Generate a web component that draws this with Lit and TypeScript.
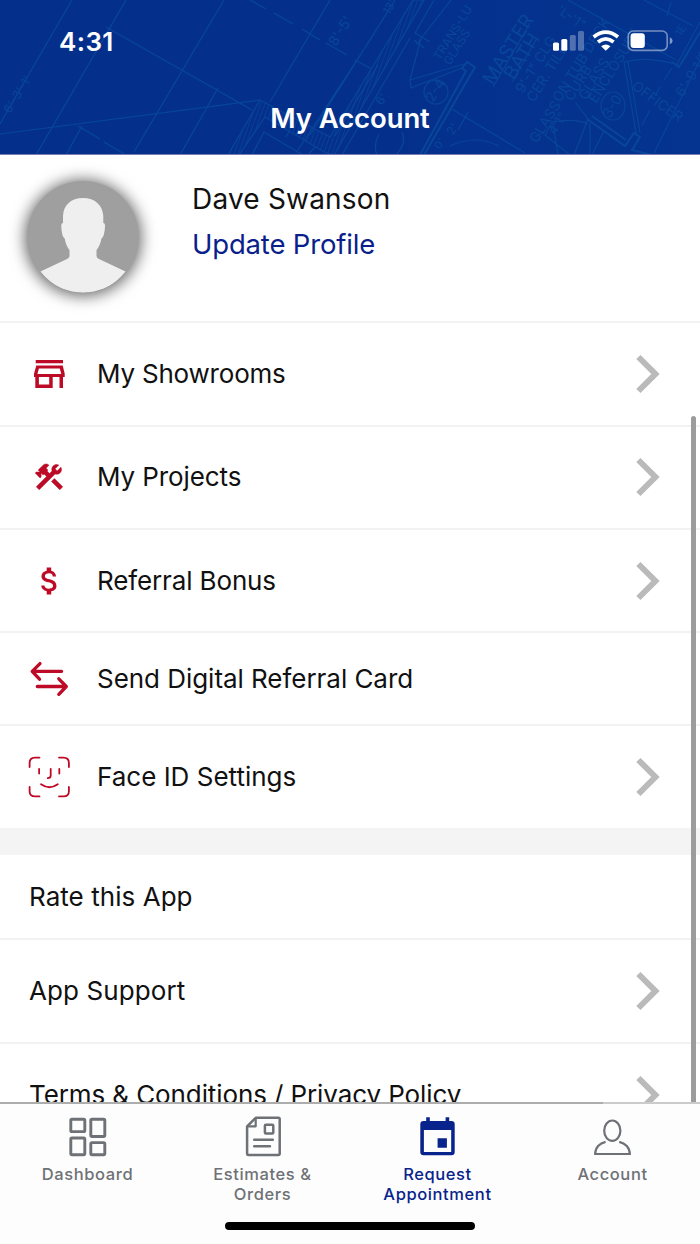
import { LitElement, html, svg, css } from "lit";
import { customElement, property } from "lit/decorators.js";
import { classMap } from "lit/directives/class-map.js";
import { styleMap } from "lit/directives/style-map.js";

const RED = "#bd0a26";

const rowIcons: Record<string, unknown> = {
  store: svg`<path fill=${RED} fill-rule="evenodd" d="M10.7 10H38V13.3H10.7Z M11.3 15.6H37.7L39.7 23.7V27H38V38H34.5V27H27.7V38H10.3V27H9V23.7Z M13.9 18.6L12.4 24H36.3L34.8 18.6Z M13.9 27V34.5H24.2V27Z"/>`,
  tools: svg`<path fill=${RED} stroke=${RED} stroke-width=".35" transform="translate(7.3 7.2) scale(1.39)" d="M13.78 15.3L19.78 21.3L21.89 19.14L15.89 13.14L13.78 15.3M17.5 10.1C17.11 10.1 16.69 10.05 16.36 9.91L4.97 21.25L2.86 19.14L10.27 11.74L8.5 9.96L7.78 10.66L6.33 9.25V12.11L5.63 12.81L2.11 9.25L2.81 8.55H5.62L4.22 7.14L7.78 3.58C8.95 2.41 10.83 2.41 12 3.58L9.89 5.74L11.3 7.14L10.59 7.85L12.38 9.63L14.2 7.75C14.06 7.42 14 7 14 6.63C14 4.66 15.56 3.11 17.5 3.11C18.09 3.11 18.61 3.25 19.08 3.53L16.41 6.2L17.91 7.7L20.58 5.03C20.86 5.5 21 6 21 6.63C21 8.55 19.45 10.1 17.5 10.1Z"/>`,
  dollar: svg`<path fill=${RED} transform="translate(6.7 6) scale(1.5)" d="M11.8 10.9c-2.27-.59-3-1.2-3-2.15 0-1.09 1.01-1.85 2.7-1.85 1.78 0 2.44.85 2.5 2.1h2.21c-.07-1.72-1.12-3.3-3.21-3.81V3h-3v2.16c-1.94.42-3.5 1.68-3.5 3.61 0 2.31 1.91 3.46 4.7 4.13 2.5.6 3 1.48 3 2.41 0 .69-.49 1.79-2.7 1.79-2.06 0-2.87-.92-2.98-2.1h-2.2c.12 2.19 1.76 3.42 3.68 3.83V21h3v-2.15c1.95-.37 3.5-1.5 3.5-3.55 0-2.84-2.43-3.81-4.7-4.4z"/>`,
  swap: svg`<path fill="none" stroke=${RED} stroke-width="3.3" stroke-linecap="round" stroke-linejoin="round" d="M36.6 16.3H7.3M15 8.6L7.2 16.3L14.5 24.2M12.3 31.5H41M33.8 23.8L41.3 31.5L33.8 39.3"/>`,
  face: svg`<path fill="none" stroke=${RED} stroke-width="1.8" stroke-linecap="round" d="M4.6 14V10Q4.6 4.6 10 4.6H14.5M34 4.6H38.5Q43.9 4.6 43.9 10V14M43.9 34V38.2Q43.9 43.4 38.5 43.4H34M14.5 43.4H10Q4.6 43.4 4.6 38.2V34M14.1 16V20.6M34.3 16V20.6M25.7 16V22.6Q25.6 25 22.8 25.1M16 31.3Q24.5 37.2 32.8 31.3"/>`,
};

const tabIcons: Record<string, unknown> = {
  dashboard: svg`<g fill="none" stroke="currentColor" stroke-width="2.9"><rect x="6.8" y="7.3" width="14" height="12.3" rx="1.2"/><rect x="26.8" y="7.3" width="14" height="17.2" rx="1.2"/><rect x="6.8" y="26" width="14" height="16.7" rx="1.2"/><rect x="26.8" y="30.6" width="14" height="12.1" rx="1.2"/></g>`,
  orders: svg`<g transform="translate(-.6 0)" fill="none" stroke="currentColor" stroke-width="2.5" stroke-linejoin="round" stroke-linecap="round"><path d="M17.3 5.8H40Q41.3 5.8 41.3 7.1V41.5Q41.3 42.9 40 42.9H10Q8.7 42.9 8.7 41.5V14.4Z"/><path d="M17.3 6.8V14.3H9.7" stroke-width="2.2"/><rect x="26.5" y="12.8" width="8.4" height="8.6" rx="1"/><path d="M15.8 27.7H34.4M15.8 34.3H31.6"/></g>`,
  calendar: svg`<path transform="translate(-.6 0)" fill="currentColor" fill-rule="evenodd" d="M12.8 5.3H16.4V9H32.2V5.3H35.8V9H38Q41.3 9 41.3 12.3V40Q41.3 43.3 38 43.3H10.2Q6.9 43.3 6.9 40V12.3Q6.9 9 10.2 9H12.8Z M10.5 18V40H37.8V18Z M24.2 26.3H33.5V35.7H24.2Z"/>`,
  account: svg`<g transform="translate(-.6 0)" fill="none" stroke="currentColor" stroke-width="2.2"><ellipse cx="23.9" cy="18.7" rx="8.1" ry="10.2"/><path d="M17.2 29.8C11 31 6.8 35.8 6.8 42H41.4C41.4 35.8 37 31 30.8 29.8"/></g>`,
};

interface Row { label: string; icon?: string; arrow: boolean; cls: string; spacing: number; }

const rows: Row[] = [
  { label: "My Showrooms", icon: "store", arrow: true, cls: "tall", spacing: -0.2 },
  { label: "My Projects", icon: "tools", arrow: true, cls: "tall", spacing: -0.1 },
  { label: "Referral Bonus", icon: "dollar", arrow: true, cls: "mid", spacing: -0.13 },
  { label: "Send Digital Referral Card", icon: "swap", arrow: false, cls: "short", spacing: -0.04 },
  { label: "Face ID Settings", icon: "face", arrow: true, cls: "last", spacing: 0 },
];

const links: Row[] = [
  { label: "Rate this App", arrow: false, cls: "rate", spacing: 0.05 },
  { label: "App Support", arrow: true, cls: "support", spacing: 0.1 },
  { label: "Terms & Conditions / Privacy Policy", arrow: true, cls: "support", spacing: -0.1 },
];

@customElement("account-row")
class AccountRow extends LitElement {
  @property() label = "";
  @property() icon = "";
  @property({ type: Boolean }) arrow = false;
  @property({ type: Number }) spacing = 0;

  static styles = css`
    :host { display: flex; align-items: center; box-sizing: border-box; border-bottom: 2px solid #f2f2f2; color: #111; }
    .icon { width: 48px; height: 48px; margin: 0 24px 0 25px; flex: none; }
    .label { flex: 1; font-size: 26px; line-height: 32px; white-space: nowrap; }
    .plain { padding-left: 29px; }
    .arrow { width: 26px; height: 40px; margin-right: 39px; flex: none; }
  `;

  render() {
    return html`
      ${this.icon ? html`<svg class="icon" viewBox="0 0 48 48">${rowIcons[this.icon]}</svg>` : ""}
      <span class=${classMap({ label: true, plain: !this.icon })} style=${styleMap({ letterSpacing: `${this.spacing}px` })}>${this.label}</span>
      ${this.arrow
        ? html`<svg class="arrow" viewBox="0 0 26 40"><path d="M3.4 3L20.4 20L3.4 37" fill="none" stroke="#bababa" stroke-width="6"/></svg>`
        : ""}
    `;
  }
}

@customElement("tab-item")
class TabItem extends LitElement {
  @property() icon = "";
  @property({ type: Array }) lines: string[] = [];

  static styles = css`
    :host { display: flex; flex-direction: column; align-items: center; padding-top: 8px; color: #6e7175; }
    .icon { width: 48px; height: 48px; }
    .text { margin-top: 5px; font-size: 16.5px; line-height: 19.5px; font-weight: 500; letter-spacing: 0.6px; text-align: center; }
    .line { display: block; white-space: nowrap; }
  `;

  render() {
    return html`
      <svg class="icon" viewBox="0 0 48 48">${tabIcons[this.icon]}</svg>
      <span class="text">${this.lines.map((l) => html`<span class="line">${l}</span>`)}</span>
    `;
  }
}

@customElement("blueprint-art")
class BlueprintArt extends LitElement {
  static styles = css`
    :host { display: block; }
    .art { display: block; width: 700px; height: 155px; }
    .note { font-family: "Inter", sans-serif; font-weight: 400; }
  `;

  note(x: number, y: number, size: number, text: string, angle = -58) {
    return svg`<text class="note" font-size=${size} transform="translate(${x} ${y}) rotate(${angle})">${text}</text>`;
  }

  render() {
    return html`<svg class="art" viewBox="0 0 700 155">
      <defs>
        <pattern id="hatch" width="4" height="4" patternUnits="userSpaceOnUse" patternTransform="rotate(20)">
          <path d="M0 0V4" stroke="#08469a" stroke-width="1.4"/>
        </pattern>
      </defs>
      <g fill="none" stroke="#08469a" stroke-width="1.2">
        <path d="M72 0L0 124M126 0L36 155M224 0L134 152M330 0L270 102M218 88L180 155M82 126L66 155"/>
        <path d="M106 27L252 110M0 134L260 100M78 126L100 139M104 142L126 155"/>
        <path d="M250 0L266 9M274 13L293 24M302 29L320 40M326 43L347 55M355 60L372 69"/>
        <path d="M395 0L310 135M378 65L335 136M374 34L298 150"/>
        <path fill="url(#hatch)" d="M260 100L228 155H239L265 117L326 153L334 155L424 0H413L330 137Z"/>
        <path d="M252 155L264 132L303 155M286 137L290 130M308 155L315 147"/>
        <path d="M434 0L415 33L430 42M451 0L416 45M414 40L424 48M410 38L342 155M421 38L410 80L411 88L462 68M410 80L464 64"/>
        <path stroke-width="2" d="M420 155L466 71L462 68L467 62L475 67L424 155"/>
        <path d="M452 109L525 153M468 112L458 130M450 146Q475 134 499 146M379 134Q373 146 377 155M402 132Q407 143 396 155"/>
        <path d="M493 87L530 23M512 82L537 38"/>
        <circle cx="436" cy="92" r="12"/><ellipse cx="613" cy="106" rx="12" ry="14"/>
        <path d="M568 0L676 60M644 0L693 26M667 16L671 2M700 22L676 66"/>
        <path stroke-width="2" d="M672 62L679 67L700 32"/>
        <path d="M624 62L636 133M628 62L640 133M624 62Q645 56 675 64M672 68L664 80M660 87L655 96M650 110L642 125M700 60L654 153"/>
        <path stroke-width="2" d="M587 119L625 146L634 133L640 137L632 150L652 155M592 116L626 140"/>
        <path d="M576 103L588 119L574 155M590 123V155M604 131L592 155M570 155L545 135L552 122Q576 118 588 124M553 124L558 155"/>
      </g>
      <g fill="#08469a">
        ${this.note(10, 114, 12, "6'-3'-1'")}
        ${this.note(336, 47, 14, "8'-5'")}
        ${this.note(389, 15, 11, "13'")}
        ${this.note(440, 61, 12, "TRANS-LU")}
        ${this.note(450, 66, 12, "GLASS")}
        ${this.note(493, 86, 19, "MASTER")}
        ${this.note(514, 81, 19, "BATH")}
        ${this.note(523, 94, 14, "9'-1\" CLG")}
        ${this.note(534, 103, 14, "CER. TILE")}
        ${this.note(560, 103, 14, "ON TUB DECK")}
        ${this.note(572, 102, 14, "CURB")}
        ${this.note(586, 101, 14, "GLASS")}
        ${this.note(596, 104, 14, "ENCLOSURE")}
        ${this.note(537, 144, 14, "GLASS")}
        ${this.note(555, 136, 13, "4'1\"")}
        ${this.note(631, 88, 14, "OFFICER", 36)}
        ${this.note(683, 98, 14, "6'-9 1/2")}
        ${this.note(681, 37, 11, "1E")}
        ${this.note(556, 12, 13, "'L-'1\"", 35)}
        ${this.note(433, 103, 14, "2-4")}
        ${this.note(610, 119, 14, "3-0")}
        ${this.note(382, 106, 12, "6'")}
        ${this.note(453, 136, 12, "2'")}
        ${this.note(440, 150, 11, "0'")}
      </g>
    </svg>`;
  }
}

@customElement("app-root")
class AppRoot extends LitElement {
  static styles = css`
    :host { display: block; width: 700px; height: 1244px; overflow: hidden; background: #fff; font-family: "Inter", "Liberation Sans", sans-serif; position: relative; }
    .screen { display: flex; flex-direction: column; height: 1244px; }
    .header { display: grid; height: 155px; flex: none; box-sizing: border-box; background: linear-gradient(90deg, #04308c 55%, #04348f); color: #fff; border-bottom: 1px solid #7a7bb0; overflow: hidden; }
    .art, .bar { grid-area: 1 / 1; }
    .art { height: 154px; overflow: hidden; }
    .bar { z-index: 1; display: flex; flex-direction: column; }
    .status { display: flex; justify-content: space-between; align-items: center; height: 82px; padding: 0 27px 0 59px; }
    .time { font-size: 26px; font-weight: 600; letter-spacing: 0.4px; }
    .signals { width: 121px; height: 24px; }
    .title { align-self: center; font-size: 27.5px; font-weight: 600; line-height: 34px; margin-top: 19px; letter-spacing: -0.1px; }
    .content { flex: 1; min-height: 0; overflow: hidden; display: flex; flex-direction: column; }
    .profile { display: flex; flex: none; height: 168px; box-sizing: border-box; border-bottom: 2px solid #f2f2f2; padding-left: 27px; }
    .avatar { width: 112px; height: 112px; margin-top: 26px; border-radius: 50%; background: #9f9f9f; box-shadow: 0 1px 15px 2px rgba(0, 0, 0, 0.6); flex: none; }
    .who { margin: 27px 0 0 53px; display: flex; flex-direction: column; gap: 11px; font-size: 28px; line-height: 34px; color: #111; }
    .name { letter-spacing: 0.2px; }
    .update { color: #0b1f8c; letter-spacing: -0.18px; font-size: 27.5px; }
    account-row { flex: none; }
    .tall { height: 103.5px; }
    .mid { height: 103px; }
    .short { height: 93px; }
    .last { height: 102px; border-bottom: none; }
    .gap { flex: none; height: 27px; background: #f4f4f4; }
    .rate { height: 85px; }
    .support { height: 104px; }
    .thumb { position: absolute; right: 4px; top: 416px; width: 5px; height: 686px; border-radius: 3px 3px 0 0; background: #9c9c9c; }
    .tabs { flex: none; height: 142px; box-sizing: border-box; background: #fdfdfd; display: grid; grid-template-columns: repeat(4, 175px); grid-template-rows: 2px 1fr; }
    .rule { grid-column: 1 / -1; background: linear-gradient(90deg, #adadad 603px, #cbcbcb 603px); }
    .active { color: #08238b; }
    .home { position: absolute; left: 225px; top: 1222px; width: 250px; height: 8px; border-radius: 4px; background: #000; }
  `;

  row(r: Row) {
    return html`<account-row class=${r.cls} .label=${r.label} .icon=${r.icon ?? ""} .arrow=${r.arrow} .spacing=${r.spacing}></account-row>`;
  }

  render() {
    return html`
      <div class="screen">
        <header class="header">
          <blueprint-art class="art"></blueprint-art>
          <div class="bar">
            <div class="status">
              <span class="time">4:31</span>
              <svg class="signals" viewBox="552 29 121 24">
                <g fill="#fff">
                  <rect x="553" y="42.5" width="6" height="8.2" rx="1.5"/>
                  <rect x="561.3" y="39" width="6" height="11.7" rx="1.5"/>
                  <g opacity=".3"><rect x="569.8" y="35" width="6" height="15.7" rx="1.5"/><rect x="578" y="31" width="6" height="19.7" rx="1.5"/></g>
                  <path d="M605.8 50.8L601.1 46.3Q605.8 42.7 610.5 46.3Z"/>
                </g>
                <g fill="none" stroke="#fff" stroke-width="3.7"><path d="M593.6 37Q605.8 27.2 618 37M598 42Q605.8 35.7 613.6 42"/></g>
                <rect x="628.2" y="31" width="39" height="19.4" rx="5" fill="none" stroke="#fff" stroke-opacity=".45" stroke-width="1.6"/>
                <path d="M669.8 37.2Q672.6 38.5 672.6 40.7Q672.6 43 669.8 44.3Z" fill="#fff" opacity=".5"/>
                <rect x="630.6" y="33.3" width="14.2" height="14.8" rx="3" fill="#fff"/>
              </svg>
            </div>
            <span class="title">My Account</span>
          </div>
        </header>
        <main class="content">
          <section class="profile">
            <svg class="avatar" viewBox="1 1 112 112">
              <defs><clipPath id="disc"><circle cx="57" cy="57" r="55.5"/></clipPath></defs>
              <path clip-path="url(#disc)" fill="#efefef" d="M57 18C45 18 37.5 25 37 36V43Q35 43 35.3 47Q35.8 57 38.7 58.5Q40 66 43.5 70V76Q43.5 78 41 79L14.5 91.5Q32 113 57 113Q82 113 99.5 91.5L73 79Q70.5 78 70.5 76V70Q74 66 75.5 58.5Q78.3 57 79 47Q79.3 43 77.3 43V36C76.5 25 69 18 57 18Z"/>
            </svg>
            <div class="who"><span class="name">Dave Swanson</span><span class="update">Update Profile</span></div>
          </section>
          ${rows.map((r) => this.row(r))}
          <div class="gap"></div>
          ${links.map((r) => this.row(r))}
        </main>
        <nav class="tabs">
          <div class="rule"></div>
          <tab-item icon="dashboard" .lines=${["Dashboard"]}></tab-item>
          <tab-item icon="orders" .lines=${["Estimates &", "Orders"]}></tab-item>
          <tab-item class="active" icon="calendar" .lines=${["Request", "Appointment"]}></tab-item>
          <tab-item icon="account" .lines=${["Account"]}></tab-item>
        </nav>
      </div>
      <div class="thumb"></div>
      <div class="home"></div>
    `;
  }
}
